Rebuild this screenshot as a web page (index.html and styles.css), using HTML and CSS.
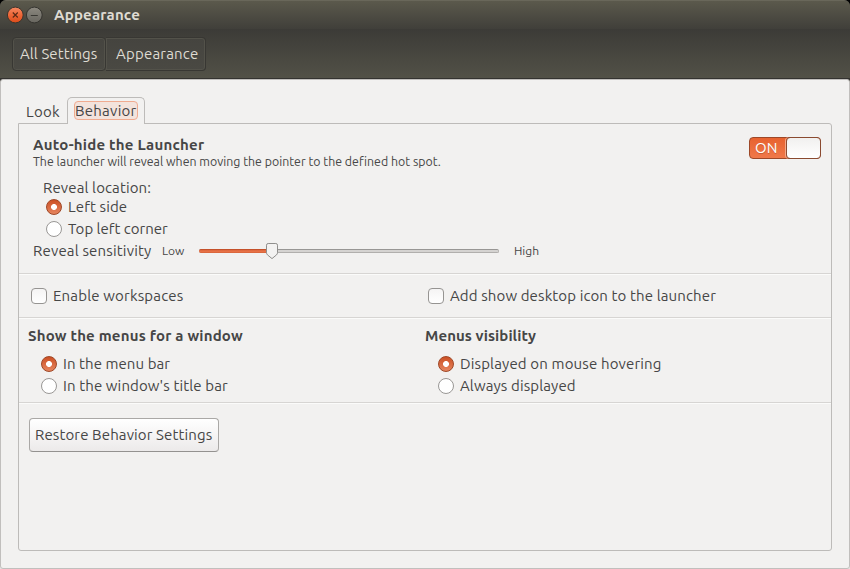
FILE: index.html
```html
<!DOCTYPE html>
<html lang="en">
<head>
<meta charset="utf-8">
<title>Appearance</title>
<link rel="stylesheet" href="styles.css">
</head>
<body>
<div class="window">
  <header class="titlebar">
    <svg class="wm" width="18" height="18" viewBox="0 0 18 18">
      <defs><linearGradient id="close" x2="0" y2="1"><stop stop-color="#f58963"/><stop offset=".5" stop-color="#ee6637"/><stop offset="1" stop-color="#dc4c1a"/></linearGradient></defs>
      <circle cx="9.3" cy="9" r="7.9" fill="url(#close)" stroke="#3b352d"/>
      <path d="M6.8 6.500l5 5M11.800 6.500l-5 5" stroke="#5b2a16" stroke-width="1.2"/>
    </svg>
    <svg class="wm" width="18" height="18" viewBox="0 0 18 18">
      <defs><linearGradient id="min" x2="0" y2="1"><stop stop-color="#8c8980"/><stop offset="1" stop-color="#68665f"/></linearGradient></defs>
      <circle cx="9.3" cy="9" r="7.9" fill="url(#min)" stroke="#35342f"/>
      <path d="M5.800 9.500h7" stroke="#393833"/>
    </svg>
    <h1><span class="t-title">Appearance</span></h1>
  </header>
  <nav class="toolbar">
    <button class="crumb first"><span class="t-all">All Settings</span></button>
    <button class="crumb last"><span class="t-app">Appearance</span></button>
  </nav>
  <main class="content">
    <div class="tabs">
      <div class="tab look"><span class="t-look">Look</span></div>
      <div class="tab active"><span class="focus"><span class="t-behavior">Behavior</span></span></div>
    </div>
    <div class="panel">
      <section class="launcher">
        <div class="head">
          <div>
            <h2><span class="t-autohide">Auto-hide the Launcher</span></h2>
            <p>The launcher will reveal when moving the pointer to the defined hot spot.</p>
          </div>
          <div class="switch"><span>ON</span><i></i></div>
        </div>
        <div class="reveal"><span class="t-loc">Reveal location:</span></div>
        <label class="option inset"><i class="radio on"></i><span class="t-left">Left side</span></label>
        <label class="option inset"><i class="radio"></i><span>Top left corner</span></label>
        <div class="sensitivity">
          <span class="name"><span class="t-sens">Reveal sensitivity</span></span>
          <small class="low">Low</small>
          <div class="slider"><div class="fill"></div>
            <svg class="thumb" width="14" height="18" viewBox="0 0 14 18">
              <path d="M3.200 1.500h7.600q1.700 0 1.700 1.700v7.500q0 1.200-1 2.200L7 16.600l-4.500-3.700q-1-1-1-2.200V3.200q0-1.700 1.700-1.700z" fill="#f3f2f1" stroke="#8f8e8c"/>
            </svg>
          </div>
          <small>High</small>
        </div>
      </section>
      <section class="checks">
        <label class="option"><i class="check"></i><span class="t-enable">Enable workspaces</span></label>
        <label class="option"><i class="check"></i><span class="t-add">Add show desktop icon to the launcher</span></label>
      </section>
      <section class="menus">
        <div>
          <h2><span class="t-show">Show the menus for a window</span></h2>
          <label class="option"><i class="radio on"></i><span class="t-menubar">In the menu bar</span></label>
          <label class="option"><i class="radio"></i><span class="t-titlebar">In the window's title bar</span></label>
        </div>
        <div>
          <h2><span class="t-vis">Menus visibility</span></h2>
          <label class="option"><i class="radio on"></i><span class="t-hover">Displayed on mouse hovering</span></label>
          <label class="option"><i class="radio"></i><span class="t-always">Always displayed</span></label>
        </div>
      </section>
      <button class="restore"><span class="t-restore">Restore Behavior Settings</span></button>
    </div>
  </main>
</div>
</body>
</html>
```
FILE: styles.css
```css
* { box-sizing: border-box; }
body { margin: 0; background: #000; overflow: hidden; color: #464646; font: 15px/22px "Ubuntu", "Noto Sans", sans-serif; white-space: nowrap; }
button { font: inherit; padding: 0; }
h1, h2, p { margin: 0; font-size: 15px; }
.window { width: 850px; height: 569px; display: flex; flex-direction: column; border-radius: 6px 6px 0 0; overflow: hidden; background: linear-gradient(#3c3b37 100px, #e4e3e2 100px); }
.titlebar { height: 29px; padding-left: 6px; display: flex; align-items: center; background: linear-gradient(#5b594c, #403f3a); border-top: 1px solid #69675a; color: #dfdbd2; }
.wm { margin-right: 1px; }
.titlebar h1 { margin-left: 10px; }
.toolbar { height: 50px; padding: 8px 0 0 12px; display: flex; background: linear-gradient(#3c3b37, #525147); border-bottom: 1px solid #343330; }
.crumb { height: 34px; color: #dfdbd2; background: linear-gradient(#45443f, #4a4943); border: 1px solid #383733; box-shadow: inset 0 0 0 1px #53524a; text-align: left; padding-left: 7px; }
.crumb.first { width: 94px; border-radius: 4px; }
.crumb.last { width: 100px; border-left: 0; padding-left: 10px; border-radius: 0 4px 4px 0; }
.content { height: 490px; padding: 17px 17px 0; background: #f2f1f0; border: 1px solid #c1bfbd; border-radius: 3px; }
.tabs { display: flex; height: 27px; align-items: flex-end; margin-bottom: -1px; position: relative; }
.tab { height: 27px; }
.look { width: 49px; padding: 4px 0 0 8px; }
.active { width: 78px; padding: 3px 0 0 6px; background: #f2f1f0; border: 1px solid #bdbbb9; border-bottom: 0; border-radius: 5px 5px 0 0; }
.focus { display: block; width: 64px; height: 19px; line-height: 18px; background: #f3e3dc; border: 1px solid #f0ab90; border-radius: 4px; }
.panel { height: 428px; border: 1px solid #bdbbb9; border-radius: 0 3px 3px 3px; }
section { border-bottom: 1px solid #d7d5d3; box-shadow: 0 1px #fbfbfa; }
.launcher { height: 150px; padding: 11px 10px 0 14px; }
.head { display: flex; justify-content: space-between; height: 43px; }
.head h2 { line-height: 20px; }
.head p { font-size: 12.33px; line-height: 14px; letter-spacing: .01px; }
.switch { display: flex; width: 72px; height: 22px; margin-top: 2px; background: linear-gradient(#e7622f, #f0794a); border: 1px solid #9d4828; border-radius: 4px; color: #fff; font-size: 15px; line-height: 20px; padding-left: 5px; justify-content: space-between; text-shadow: 0 1px #a8472388; }
.switch i { width: 35px; margin: -1px; height: 22px; border: 1px solid #8a4a30; border-radius: 4px; background: linear-gradient(#f1f0ef, #fff); box-shadow: -1px 0 #f4a98a; }
.reveal { height: 18px; line-height: 20px; padding-left: 10px; }
.option { height: 22px; display: flex; align-items: center; }
.inset { padding-left: 13px; }
.radio { width: 16px; height: 16px; margin-right: 6px; border: 1px solid #999795; border-radius: 50%; background: #fff; }
.radio.on { border-color: #9f4726; background: radial-gradient(circle, #fff 2.6px, transparent 3.3px), linear-gradient(#cc5024, #e6855f); }
.sensitivity { height: 22px; display: flex; align-items: center; }
.name { width: 129px; }
small { font-size: 12px; }
.low { width: 37px; }
.slider { position: relative; width: 300px; height: 4px; border: 1px solid #b1afad; border-top-color: #989694; border-radius: 2px; background: #d5d3d1; margin-right: 15px; }
.fill { width: 70px; height: 4px; margin: -1px; background: linear-gradient(#b8451f, #ed764a 50%, #d56339); border-radius: 2px 0 0 2px; }
.thumb { position: absolute; left: 65px; top: -8px; }
.checks { height: 44px; padding: 11px 0 0 12px; display: grid; grid-template-columns: 397px 1fr; }
.check { width: 16px; height: 16px; margin-right: 6px; border: 1px solid #969492; border-radius: 4px; background: linear-gradient(#f5f4f4, #fff); }
.menus { height: 85px; padding: 7px 0 0 9px; display: grid; grid-template-columns: 397px 1fr; }
.menus h2 { height: 28px; }
.menus .option { padding-left: 13px; }
.restore { display: block; width: 190px; height: 34px; margin: 15px 0 0 10px; padding-left: 5px; text-align: left; color: #464646; border: 1px solid #aaa8a6; border-bottom-color: #949290; border-radius: 4px; background: linear-gradient(#fff, #eceaea); }

/* Tracking per label */
.t-title, .t-app { letter-spacing: .2px; }
.t-all { letter-spacing: .09px; }
.t-look { letter-spacing: .25px; }
.t-behavior { letter-spacing: .25px; }
.t-autohide { letter-spacing: .23px; }
.t-loc, .t-left, .t-add, .t-titlebar, .t-always, .t-restore { letter-spacing: .12px; }
.t-sens, .t-enable { letter-spacing: .17px; }
.t-show { letter-spacing: .2px; }
.t-vis, .t-menubar { letter-spacing: .07px; }
.t-hover { letter-spacing: .15px; }
```
